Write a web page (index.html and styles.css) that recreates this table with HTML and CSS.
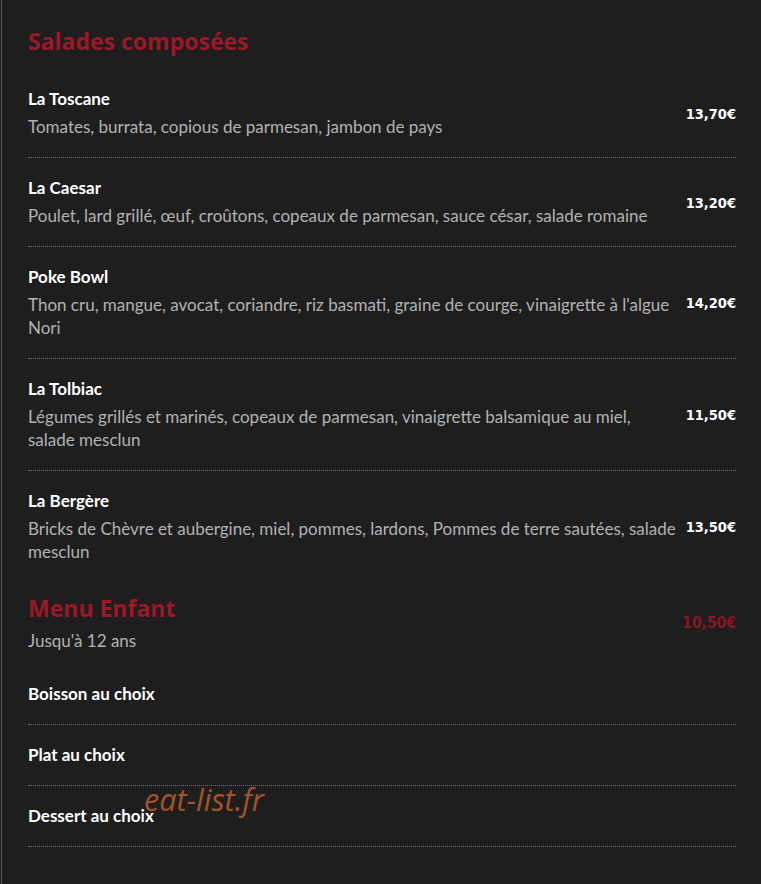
FILE: index.html
```html
<!DOCTYPE html>
<html lang="fr">
<head>
<meta charset="utf-8">
<link rel="stylesheet" href="styles.css">
</head>
<body>
<div class="page">
  <section class="section">
    <h2 class="section-title">Salades composées</h2>
    <div class="item">
      <div class="item-text">
        <div class="item-name">La Toscane</div>
        <div class="item-desc">Tomates, burrata, copious de parmesan, jambon de pays</div>
      </div>
      <div class="item-price">13,70€</div>
    </div>
    <div class="item">
      <div class="item-text">
        <div class="item-name">La Caesar</div>
        <div class="item-desc">Poulet, lard grillé, œuf, croûtons, copeaux de parmesan, sauce césar, salade romaine</div>
      </div>
      <div class="item-price">13,20€</div>
    </div>
    <div class="item">
      <div class="item-text">
        <div class="item-name">Poke Bowl</div>
        <div class="item-desc">Thon cru, mangue, avocat, coriandre, riz basmati, graine de courge, vinaigrette à l'algue Nori</div>
      </div>
      <div class="item-price">14,20€</div>
    </div>
    <div class="item">
      <div class="item-text">
        <div class="item-name">La Tolbiac</div>
        <div class="item-desc">Légumes grillés et marinés, copeaux de parmesan, vinaigrette balsamique au miel, salade mesclun</div>
      </div>
      <div class="item-price">11,50€</div>
    </div>
    <div class="item item-last">
      <div class="item-text">
        <div class="item-name">La Bergère</div>
        <div class="item-desc">Bricks de Chèvre et aubergine, miel, pommes, lardons, Pommes de terre sautées, salade mesclun</div>
      </div>
      <div class="item-price">13,50€</div>
    </div>
  </section>
  <section class="section menu">
    <div class="menu-head">
      <div class="menu-head-text">
        <h2 class="section-title menu-title">Menu Enfant</h2>
        <div class="item-desc">Jusqu'à 12 ans</div>
      </div>
      <div class="menu-price">10,50€</div>
    </div>
    <div class="choice">Boisson au choix</div>
    <div class="choice">Plat au choix</div>
    <div class="choice choice-mark">Dessert au choix<span class="watermark">eat-list.fr</span></div>
  </section>
</div>
</body>
</html>
```
FILE: styles.css
```css
html, body {
  margin: 0;
  padding: 0;
  background: #1e1e1e;
}
body {
  font-family: "Lato", "Open Sans", sans-serif;
  color: #fff;
  height: 884px;
  overflow: hidden;
}
.page {
  border-left: 1px solid #5a5a5a;
  margin-left: 1px;
  padding: 24px 25px 0 26px;
  min-height: 884px;
  box-sizing: border-box;
}
.section-title {
  margin: 0;
  font-family: "Open Sans", sans-serif;
  font-weight: 700;
  font-size: 23px;
  line-height: 34px;
  color: #9c1727;
}
.item {
  display: flex;
  align-items: center;
  justify-content: space-between;
  padding: 20px 0 19px;
  border-bottom: 1px dotted #6e6e6e;
}
.section-title + .item {
  padding-top: 31px;
}
.item-last {
  border-bottom: none;
}
.item-text {
  flex: 1;
  padding-right: 6px;
}
.item-name {
  font-weight: 700;
  font-size: 17px;
  line-height: 20px;
  color: #fff;
  margin-bottom: 6px;
}
.item-desc {
  font-size: 17px;
  line-height: 23px;
  color: #b2b2b2;
}
.item-price {
  font-family: "DejaVu Sans Condensed", "DejaVu Sans", sans-serif;
  font-weight: 700;
  font-size: 14.5px;
  color: #fff;
  white-space: nowrap;
}
.menu {
  margin-top: 11px;
}
.menu-head {
  display: flex;
  align-items: center;
  justify-content: space-between;
  padding-bottom: 12px;
}
.menu-title {
  line-height: 30px;
  margin-bottom: 6px;
}
.menu-price {
  font-family: "DejaVu Sans Condensed", "DejaVu Sans", sans-serif;
  font-weight: 700;
  font-size: 15.5px;
  color: #8c1424;
  padding-bottom: 0;
}
.choice {
  font-weight: 700;
  font-size: 17px;
  line-height: 20px;
  padding: 20px 0;
  border-bottom: 1px dotted #6e6e6e;
}
.choice-mark {
  position: relative;
}
.watermark {
  position: absolute;
  left: 116px;
  top: -7px;
  font-family: "Open Sans", sans-serif;
  font-style: italic;
  font-weight: 400;
  font-size: 30.5px;
  line-height: 41px;
  color: #a3532c;
}
```
